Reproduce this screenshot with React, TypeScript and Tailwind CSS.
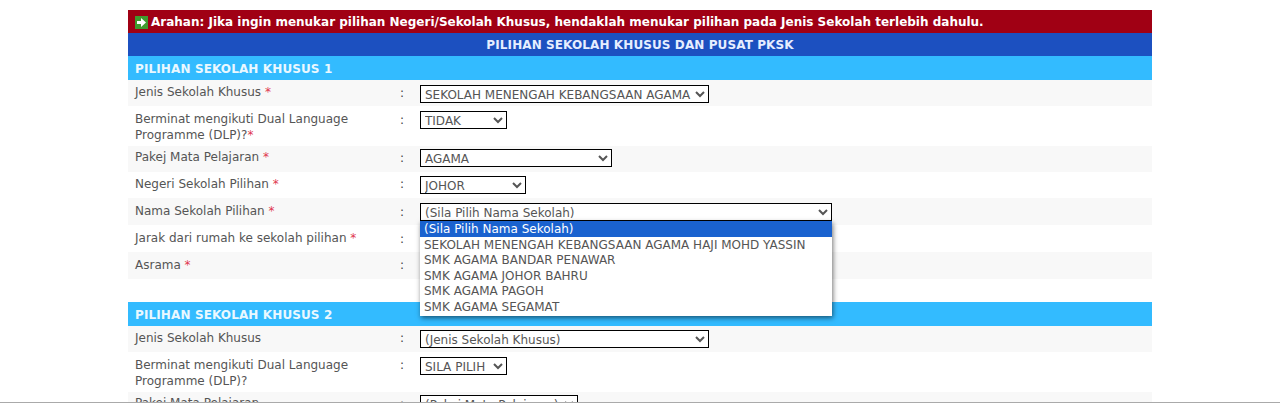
const font = { fontFamily: '"DejaVu Sans", Verdana, sans-serif' };

type Row = {
  label: string;
  star?: string;
  value: string;
  width: string;
  bg: string;
  height: string;
  labelTop: string;
  colonTop: string;
  selectTop: string;
};

const Req = ({ text }: { text: string }) => <span className="text-[#e0374f]">{text}</span>;

function FormRow({ label, star, value, width, bg, height, labelTop, colonTop, selectTop }: Row) {
  return (
    <div className={`flex ${bg} ${height}`}>
      <div className={`w-[272px] pl-[7px] pr-[30px] ${labelTop} text-[12px] leading-[16px] text-[#555]`}>
        {label}
        {star && <Req text={star} />}
      </div>
      <div className={`w-[20px] ${colonTop} text-[12px] leading-[16px] text-[#444]`}>:</div>
      <div className={selectTop}>
        <select
          defaultValue={value}
          className={`block ${width} h-[18px] border border-black bg-white pt-[1px] text-[12px] leading-[14px] text-[#555]`}
          style={font}
        >
          <option>{value}</option>
        </select>
      </div>
    </div>
  );
}

const SectionTitle = ({ text }: { text: string }) => (
  <div className="flex h-[24px] items-center bg-[#33bbff] pl-[7px] pt-[1px] text-[12px] font-bold tracking-[0.12px] text-[#eaf8ff]">
    {text}
  </div>
);

const firstRows: Row[] = [
  { label: 'Jenis Sekolah Khusus ', star: '*', value: 'SEKOLAH MENENGAH KEBANGSAAN AGAMA', width: 'w-[289px]', bg: 'bg-[#f8f8f8]', height: 'h-[26px]', labelTop: 'pt-[4px]', colonTop: 'pt-[5px]', selectTop: 'pt-[5px]' },
  { label: 'Berminat mengikuti Dual Language Programme (DLP)?', star: '*', value: 'TIDAK', width: 'w-[87px]', bg: 'bg-white', height: 'h-[40px]', labelTop: 'pt-[5px]', colonTop: 'pt-[6px]', selectTop: 'pt-[5px]' },
  { label: 'Pakej Mata Pelajaran ', star: '*', value: 'AGAMA', width: 'w-[192px]', bg: 'bg-[#f8f8f8]', height: 'h-[26px]', labelTop: 'pt-[3px]', colonTop: 'pt-[4px]', selectTop: 'pt-[3px]' },
  { label: 'Negeri Sekolah Pilihan ', star: '*', value: 'JOHOR', width: 'w-[106px]', bg: 'bg-white', height: 'h-[26px]', labelTop: 'pt-[4px]', colonTop: 'pt-[4px]', selectTop: 'pt-[4px]' },
  { label: 'Nama Sekolah Pilihan ', star: '*', value: '(Sila Pilih Nama Sekolah)', width: 'w-[412px]', bg: 'bg-[#f8f8f8]', height: 'h-[27px]', labelTop: 'pt-[5px]', colonTop: 'pt-[6px]', selectTop: 'pt-[5px]' },
  { label: 'Jarak dari rumah ke sekolah pilihan ', star: '*', value: '', width: 'w-[100px]', bg: 'bg-white', height: 'h-[27px]', labelTop: 'pt-[5px]', colonTop: 'pt-[6px]', selectTop: 'pt-[5px]' },
  { label: 'Asrama ', star: '*', value: '', width: 'w-[100px]', bg: 'bg-[#f8f8f8]', height: 'h-[27px]', labelTop: 'pt-[5px]', colonTop: 'pt-[5px]', selectTop: 'pt-[5px]' },
];

const secondRows: Row[] = [
  { label: 'Jenis Sekolah Khusus', value: '(Jenis Sekolah Khusus)', width: 'w-[289px]', bg: 'bg-[#f8f8f8]', height: 'h-[26px]', labelTop: 'pt-[4px]', colonTop: 'pt-[4px]', selectTop: 'pt-[4px]' },
  { label: 'Berminat mengikuti Dual Language Programme (DLP)?', value: 'SILA PILIH', width: 'w-[87px]', bg: 'bg-white', height: 'h-[40px]', labelTop: 'pt-[5px]', colonTop: 'pt-[5px]', selectTop: 'pt-[5px]' },
  { label: 'Pakej Mata Pelajaran', value: '(Pakej Mata Pelajaran)', width: 'w-[158px]', bg: 'bg-[#f8f8f8]', height: 'h-[26px]', labelTop: 'pt-[3px]', colonTop: 'pt-[4px]', selectTop: 'pt-[3px]' },
];

const schools = [
  'SEKOLAH MENENGAH KEBANGSAAN AGAMA HAJI MOHD YASSIN',
  'SMK AGAMA BANDAR PENAWAR',
  'SMK AGAMA JOHOR BAHRU',
  'SMK AGAMA PAGOH',
  'SMK AGAMA SEGAMAT',
];

export default function App() {
  return (
    <div className="relative h-[403px] w-[1280px] overflow-hidden bg-white" style={font}>
      <div className="mx-auto w-[1024px] pt-[10px]">
        {/* Notice */}
        <div className="flex h-[23px] items-center gap-[3px] bg-[#a00014] pl-[7px] pt-[1px] text-[12px] font-bold text-white">
          <svg width="13" height="13" viewBox="0 0 13 13">
            <rect width="13" height="13" fill="#3f9b2d" />
            <path d="M2 5h4V2l5 4.5L6 11V8H2z" fill="#fff" />
          </svg>
          <span>Arahan: Jika ingin menukar pilihan Negeri/Sekolah Khusus, hendaklah menukar pilihan pada Jenis Sekolah terlebih dahulu.</span>
        </div>
        <div className="flex h-[23px] items-center justify-center bg-[#1c50c0] text-[12px] font-bold tracking-[0.1px] text-[#e6eeff]">
          PILIHAN SEKOLAH KHUSUS DAN PUSAT PKSK
        </div>

        <SectionTitle text="PILIHAN SEKOLAH KHUSUS 1" />
        {firstRows.map((row) => (
          <FormRow key={row.label} {...row} />
        ))}

        <div className="h-[23px]" />

        <SectionTitle text="PILIHAN SEKOLAH KHUSUS 2" />
        {secondRows.map((row) => (
          <FormRow key={row.label} {...row} />
        ))}
      </div>

      {/* Open select list */}
      <div className="absolute left-[420px] top-[221px] w-[412px] bg-white pb-[1px] text-[12px] leading-[15.4px] text-[#555] shadow-[1px_2px_5px_rgba(0,0,0,0.55)]">
        <div className="mb-[1px] h-[16px] bg-[#1a62cf] pl-[4px] pt-[1px] text-white">(Sila Pilih Nama Sekolah)</div>
        {schools.map((school) => (
          <div key={school} className="pl-[4px]">
            {school}
          </div>
        ))}
      </div>

      <div className="absolute inset-x-0 bottom-0 h-px bg-[#aaa]" />
    </div>
  );
}
